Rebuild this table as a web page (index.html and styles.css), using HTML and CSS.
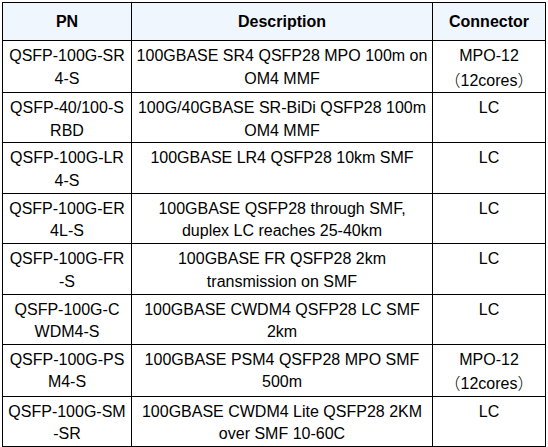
FILE: index.html
```html
<!DOCTYPE html>
<html>
<head>
<meta charset="utf-8">
<link rel="stylesheet" href="styles.css">
</head>
<body>
<div class="page">
<table class="spec">
  <colgroup>
    <col class="c-pn">
    <col class="c-desc">
    <col class="c-conn">
  </colgroup>
  <thead>
    <tr><th>PN</th><th>Description</th><th>Connector</th></tr>
  </thead>
  <tbody>
    <tr><td class="pn">QSFP-100G-SR4-S</td><td>100GBASE SR4 QSFP28 MPO 100m on OM4 MMF</td><td>MPO-12<br><span class="fw">（</span>12cores<span class="fw">）</span></td></tr>
    <tr><td class="pn">QSFP-40/100-SRBD</td><td>100G/40GBASE SR-BiDi QSFP28 100m OM4 MMF</td><td>LC</td></tr>
    <tr><td class="pn">QSFP-100G-LR4-S</td><td>100GBASE LR4 QSFP28 10km SMF</td><td>LC</td></tr>
    <tr><td class="pn">QSFP-100G-ER4L-S</td><td>100GBASE QSFP28 through SMF, duplex LC reaches 25-40km</td><td>LC</td></tr>
    <tr><td class="pn">QSFP-100G-FR-S</td><td>100GBASE FR QSFP28 2km transmission on SMF</td><td>LC</td></tr>
    <tr><td class="pn">QSFP-100G-CWDM4-S</td><td>100GBASE CWDM4 QSFP28 LC SMF 2km</td><td>LC</td></tr>
    <tr><td class="pn">QSFP-100G-PSM4-S</td><td>100GBASE PSM4 QSFP28 MPO SMF 500m</td><td>MPO-12<br><span class="fw">（</span>12cores<span class="fw">）</span></td></tr>
    <tr><td class="pn">QSFP-100G-SM-SR</td><td>100GBASE CWDM4 Lite QSFP28 2KM over SMF 10-60C</td><td>LC</td></tr>
  </tbody>
</table>
</div>
</body>
</html>
```
FILE: styles.css
```css
html, body {
  margin: 0;
  padding: 0;
  background: #ffffff;
}
.page {
  padding: 2px 0 0 2px;
}
.spec {
  border-collapse: collapse;
  table-layout: fixed;
  width: 543px;
  font-family: "Liberation Sans", Arial, sans-serif;
  font-size: 16px;
  color: #000;
}
.c-pn { width: 129px; }
.c-desc { width: 301px; }
.c-conn { width: 113px; }
.spec th, .spec td {
  border: 1px solid #000;
  text-align: center;
}
.spec th {
  background: #eff6fd;
  font-weight: bold;
  height: 37px;
  padding: 0 4px;
  line-height: 22px;
  vertical-align: middle;
}
.spec td {
  height: 50.4px;
  box-sizing: border-box;
  padding: 4px 4px 0;
  line-height: 22.5px;
  vertical-align: top;
}
.spec td.pn {
  word-break: break-all;
  padding-left: 5px;
  padding-right: 5px;
}
.fw {
  font-family: "Noto Sans CJK SC", sans-serif;
  font-weight: 300;
}
```
